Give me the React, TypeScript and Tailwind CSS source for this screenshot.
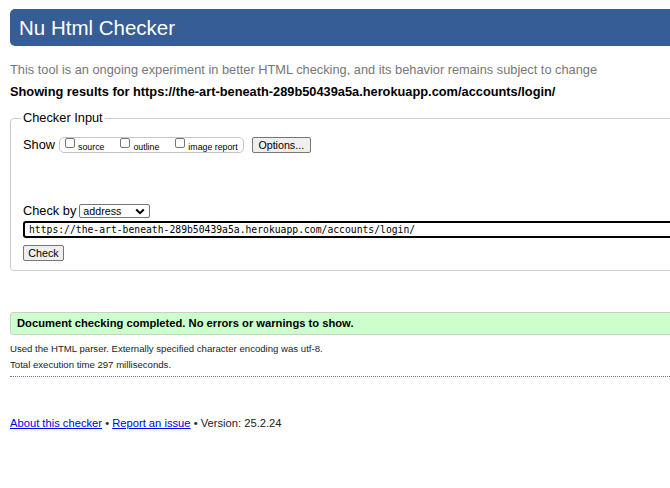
export default function App() {
  return (
    <div className="h-[488px] w-full overflow-hidden bg-white font-['Liberation_Sans',Arial,sans-serif] text-black">
      <div className="w-[720px] pl-[10px] pt-[9px]">
        <header className="flex h-[37px] items-center rounded-l-[5px] bg-[#365d95] pl-[9px] pt-[1px]">
          <h1 className="text-[20.5px] leading-none text-white">Nu Html Checker</h1>
        </header>

        <p className="mt-[16px] text-[12.8px] leading-[16px] text-[#777]">
          This tool is an ongoing experiment in better HTML checking, and its behavior remains subject to change
        </p>
        <p className="mt-[6px] text-[12.8px] font-bold leading-[16px]">
          Showing results for https://the-art-beneath-289b50439a5a.herokuapp.com/accounts/login/
        </p>

        <fieldset className="mt-[10px] rounded-[4px] border border-[#ccc] pb-[9px] pl-[12px]">
          <legend className="-ml-[2px] px-[2px] text-[12.8px] leading-[16px]">Checker Input</legend>

          <div className="mt-[11px] flex h-[16px] items-center">
            <span className="text-[12.8px] leading-[16px]">Show</span>
            <div className="ml-[4px] flex h-[16px] items-start rounded-[5px] border border-[#c4c4c4] pl-[5px] pr-[5px]">
              <span className="h-[10px] w-[10px] rounded-[2px] border border-[#767676] bg-white" />
              <span className="ml-[3px] mt-[4px] text-[8.8px] leading-[10px]">source</span>
              <span className="ml-[16px] h-[10px] w-[10px] rounded-[2px] border border-[#767676] bg-white" />
              <span className="ml-[3px] mt-[4px] text-[8.8px] leading-[10px]">outline</span>
              <span className="ml-[16px] h-[10px] w-[10px] rounded-[2px] border border-[#767676] bg-white" />
              <span className="ml-[3px] mt-[4px] text-[8.8px] leading-[10px]">image report</span>
            </div>
            <button className="ml-[8px] flex h-[16px] w-[59px] items-center justify-center rounded-[2px] border border-[#767676] bg-[#efefef] text-[10.7px] leading-none">
              Options...
            </button>
          </div>

          <div className="mt-[50px] flex h-[16px] items-center">
            <span className="text-[12.8px] leading-[16px]">Check by</span>
            <div className="ml-[3px] flex h-[14px] w-[71px] items-center justify-between rounded-[2px] border border-[#767676] bg-white pl-[3px] pr-[4px]">
              <span className="text-[10.7px] leading-none">address</span>
              <svg width="10" height="7" viewBox="0 0 10 7" fill="none">
                <path d="M1.2 1.5 L5 5.2 L8.8 1.5" stroke="#000" strokeWidth="2" />
              </svg>
            </div>
          </div>

          <div className="mt-[2px] flex h-[17px] items-center rounded-[3px] border-2 border-black pl-[4px]">
            <span className="font-['DejaVu_Sans_Mono',monospace] text-[9.72px] leading-none">
              https://the-art-beneath-289b50439a5a.herokuapp.com/accounts/login/
            </span>
          </div>

          <button className="mt-[7px] flex h-[16px] w-[41px] items-center justify-center rounded-[2px] border border-[#767676] bg-[#efefef] text-[10.7px] leading-none">
            Check
          </button>
        </fieldset>

        <div className="mt-[41px] flex h-[23px] items-center rounded-[3px] border border-[#ccc] bg-[#ccffcc] pl-[6px]">
          <span className="text-[11.2px] font-bold leading-none">
            Document checking completed. No errors or warnings to show.
          </span>
        </div>

        <div className="mt-[6px] text-[9.6px] leading-[16px] text-[#222]">
          <p>Used the HTML parser. Externally specified character encoding was utf-8.</p>
          <p>Total execution time 297 milliseconds.</p>
        </div>
        <div className="mt-[3px] border-t border-dotted border-[#777]" />

        <p className="mt-[38px] text-[11.2px] leading-[16px] text-[#222]">
          <a href="#" className="text-[#00e] underline">About this checker</a>
          {" • "}
          <a href="#" className="text-[#00e] underline">Report an issue</a>
          {" • Version: 25.2.24"}
        </p>
      </div>
    </div>
  );
}
